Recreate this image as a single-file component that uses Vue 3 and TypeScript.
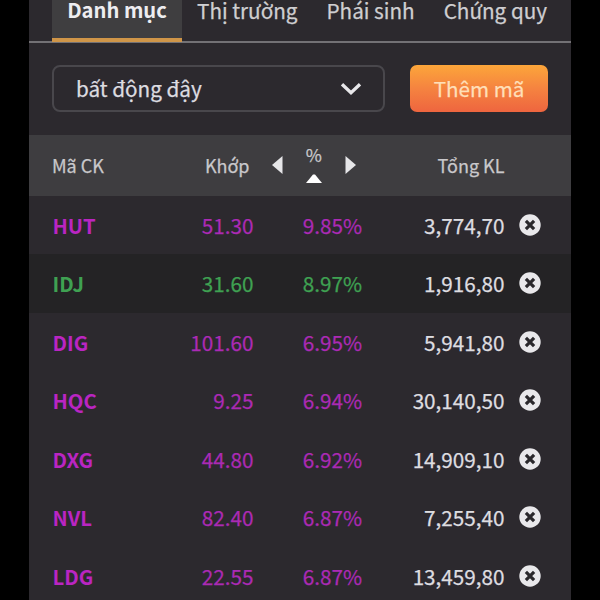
<script setup lang="ts">
interface Stock {
  code: string
  price: string
  change: string
  volume: string
  tone: 'ceiling' | 'up'
}

const tabs: string[] = ['Danh mục', 'Thị trường', 'Phái sinh', 'Chứng quy']

const stocks: Stock[] = [
  { code: 'HUT', price: '51.30', change: '9.85%', volume: '3,774,70', tone: 'ceiling' },
  { code: 'IDJ', price: '31.60', change: '8.97%', volume: '1,916,80', tone: 'up' },
  { code: 'DIG', price: '101.60', change: '6.95%', volume: '5,941,80', tone: 'ceiling' },
  { code: 'HQC', price: '9.25', change: '6.94%', volume: '30,140,50', tone: 'ceiling' },
  { code: 'DXG', price: '44.80', change: '6.92%', volume: '14,909,10', tone: 'ceiling' },
  { code: 'NVL', price: '82.40', change: '6.87%', volume: '7,255,40', tone: 'ceiling' },
  { code: 'LDG', price: '22.55', change: '6.87%', volume: '13,459,80', tone: 'ceiling' },
]
</script>

<template>
  <div class="screen">
    <main class="panel">
      <nav class="tabs">
        <a v-for="(tab, i) in tabs" :key="tab" class="tab" :class="{ active: i === 0 }">{{ tab }}</a>
      </nav>

      <div class="toolbar">
        <div class="select">
          <span>bất động đậy</span>
          <svg width="22" height="14" viewBox="0 0 22 14">
            <path d="M2 2.2 L11 10.7 L20 2.2" fill="none" stroke="#e8e7ea" stroke-width="3.3" />
          </svg>
        </div>
        <button class="add">Thêm mã</button>
      </div>

      <div class="grid head">
        <span>Mã CK</span>
        <span class="right price-head">Khớp</span>
        <span class="sorter">
          <svg width="11" height="18" viewBox="0 0 11 18"><path d="M10.5 0 V18 L0 9 Z" fill="#e6e6e8" /></svg>
          <span class="sort-mid">
            <span>%</span>
            <svg width="16" height="9" viewBox="0 0 16 9"><path d="M0 9 L7 0.6 H9 L16 9 Z" fill="#fff" /></svg>
          </span>
          <svg width="11" height="18" viewBox="0 0 11 18"><path d="M0.5 0 V18 L11 9 Z" fill="#e6e6e8" /></svg>
        </span>
        <span class="right">Tổng KL</span>
      </div>

      <div v-for="stock in stocks" :key="stock.code" class="grid row" :class="stock.tone">
        <span class="code">{{ stock.code }}</span>
        <span class="right">{{ stock.price }}</span>
        <span class="right change">{{ stock.change }}</span>
        <span class="right volume">{{ stock.volume }}</span>
        <svg class="remove" width="22" height="22" viewBox="0 0 22 22">
          <circle cx="11" cy="11" r="10.7" fill="#e9e8eb" />
          <path d="M6.9 6.9 L15.1 15.1 M15.1 6.9 L6.9 15.1" stroke="#2a282c" stroke-width="3.2" />
        </svg>
      </div>
    </main>
  </div>
</template>

<style>
body {
  background: #000;
  overflow: hidden;
}
</style>

<style scoped>
.screen {
  box-sizing: border-box;
  width: 600px;
  height: 600px;
  padding: 0 29px;
  overflow: hidden;
  background: #000;
  font-family: "Noto Sans CJK SC", "Noto Sans", sans-serif;
  -webkit-text-stroke: 0.25px currentColor;
}
.panel {
  height: 600px;
  overflow: hidden;
  background: #2c292e;
}
.tabs {
  box-sizing: border-box;
  display: flex;
  height: 42.5px;
  padding-left: 23px;
  border-bottom: 2px solid #737175;
}
.tab {
  box-sizing: border-box;
  height: 41.5px;
  margin-left: 29px;
  color: #cfced1;
  font-size: 20.7px;
  line-height: 21px;
  white-space: nowrap;
}
.tab.active {
  width: 130px;
  margin-left: 0;
  margin-right: -14px;
  border-bottom: 4px solid #cf9548;
  background: #3f3e40;
  color: #eeedf0;
  font-size: 20.2px;
  font-weight: 700;
  line-height: 19px;
  text-align: center;
  -webkit-text-stroke: 0;
}
.toolbar {
  display: flex;
  gap: 25px;
  height: 47px;
  padding: 22.5px 23px;
}
.select {
  box-sizing: border-box;
  display: flex;
  align-items: center;
  justify-content: space-between;
  width: 333px;
  padding: 0 21px 0 22px;
  border: 2px solid #49474c;
  border-radius: 8px;
  color: #dddce0;
  font-size: 20.7px;
  line-height: 30px;
}
.select span {
  padding-bottom: 2px;
}
.add {
  width: 138px;
  padding: 0 0 2px;
  border: 0;
  border-radius: 7px;
  background: linear-gradient(#fca63a, #f58340 50%, #ee653f);
  color: #ffdfb8;
  font: inherit;
  font-size: 20.6px;
  line-height: 30px;
}
.grid {
  display: grid;
  grid-template-columns: 90px 111.5px 108.5px 142.5px 36.5px;
  align-items: center;
  padding-left: 23px;
  white-space: nowrap;
}
.right {
  text-align: right;
}
.head {
  height: 61px;
  background: #3e3d40;
  color: #c9c8cb;
  font-size: 18px;
  line-height: 28px;
}
.price-head {
  padding-right: 4px;
}
.sorter {
  display: flex;
  align-items: center;
  justify-content: space-between;
  padding: 0 6px 0 18px;
}
.sort-mid {
  display: flex;
  flex-direction: column;
  align-items: center;
  gap: 10px;
  padding-top: 4px;
  font-size: 17.5px;
  line-height: 18px;
}
.sort-mid span {
  margin-top: -5px;
}
.sort-mid svg {
  display: block;
}
.row {
  height: 58.5px;
  font-size: 20.7px;
  line-height: 30px;
}
.row > span {
  padding-top: 0.4px;
}
.row > .code {
  padding-left: 0.5px;
  font-size: 20.3px;
  font-weight: 700;
  -webkit-text-stroke: 0;
}
.ceiling {
  color: #ab2ab4;
}
.up {
  background: #242325;
  color: #3fa152;
}
.ceiling .code {
  color: #ba25c2;
}
.volume {
  color: #dedde0;
}
.remove {
  justify-self: end;
}
</style>
